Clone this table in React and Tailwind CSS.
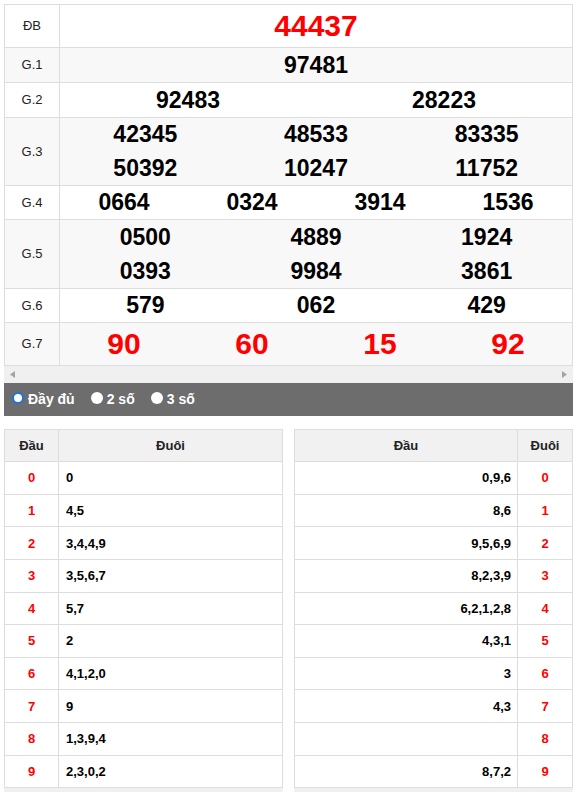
import React from "react";

const topRows = [
  { label: "ĐB", h: "h-[43px]", bg: "bg-white", cols: "grid-cols-1", big: true, lines: [["44437"]] },
  { label: "G.1", h: "h-[35px]", bg: "bg-[#f8f8f8]", cols: "grid-cols-1", lines: [["97481"]] },
  { label: "G.2", h: "h-[35px]", bg: "bg-white", cols: "grid-cols-2", lines: [["92483", "28223"]] },
  { label: "G.3", h: "h-[68px]", bg: "bg-[#f8f8f8]", cols: "grid-cols-3", lines: [["42345", "48533", "83335"], ["50392", "10247", "11752"]] },
  { label: "G.4", h: "h-[34px]", bg: "bg-white", cols: "grid-cols-4", lines: [["0664", "0324", "3914", "1536"]] },
  { label: "G.5", h: "h-[69px]", bg: "bg-[#f8f8f8]", cols: "grid-cols-3", lines: [["0500", "4889", "1924"], ["0393", "9984", "3861"]] },
  { label: "G.6", h: "h-[34px]", bg: "bg-white", cols: "grid-cols-3", lines: [["579", "062", "429"]] },
  { label: "G.7", h: "h-[43px]", bg: "bg-[#f8f8f8]", cols: "grid-cols-4", big: true, lines: [["90", "60", "15", "92"]] },
];

const leftData = ["0", "4,5", "3,4,4,9", "3,5,6,7", "5,7", "2", "4,1,2,0", "9", "1,3,9,4", "2,3,0,2"];
const rightData = ["0,9,6", "8,6", "9,5,6,9", "8,2,3,9", "6,2,1,2,8", "4,3,1", "3", "4,3", "", "8,7,2"];

function TopTable() {
  return (
    <div className="w-[569px] border-t border-l border-r border-[#ddd]">
      {topRows.map((r) => (
        <div key={r.label} className={`flex border-b border-[#ddd] ${r.h} ${r.bg}`}>
          <div className="w-[55px] shrink-0 border-r border-[#ddd] flex items-center justify-center text-[13px] text-[#222]">
            {r.label}
          </div>
          <div className="flex-1 flex flex-col">
            {r.lines.map((line, i) => (
              <div key={i} className={`grid ${r.cols} flex-1 items-center text-center`}>
                {line.map((n, j) => (
                  <span
                    key={j}
                    className={
                      r.big
                        ? "font-bold text-[30px] leading-none text-[#ff0000]"
                        : "font-bold text-[23px] leading-none text-black"
                    }
                  >
                    {n}
                  </span>
                ))}
              </div>
            ))}
          </div>
        </div>
      ))}
    </div>
  );
}

function ScrollStrip() {
  return (
    <div className="w-[569px] h-[17px] bg-[#f0f0f0] flex items-center justify-between px-[6px]">
      <svg width="5" height="7" viewBox="0 0 5 7"><polygon points="5,0 5,7 0,3.5" fill="#a3a3a3" /></svg>
      <svg width="5" height="7" viewBox="0 0 5 7"><polygon points="0,0 0,7 5,3.5" fill="#a3a3a3" /></svg>
    </div>
  );
}

function Radio({ checked, label }) {
  return (
    <div className="flex items-center gap-[4px] h-[20px]">
      {checked ? (
        <span className="w-[12px] h-[12px] mb-[3px] rounded-full border-2 border-[#1a73e8] bg-white box-border" />
      ) : (
        <span className="w-[12px] h-[12px] mb-[3px] rounded-full bg-white" />
      )}
      <span className="text-[14px] font-bold text-white leading-[20px]">{label}</span>
    </div>
  );
}

function LotoTable({ side, data }) {
  const left = side === "left";
  return (
    <div className="w-[279px]">
      <div className="border-t border-l border-r border-[#ddd]">
        <div className="flex h-[32.3px] border-b border-[#ddd] bg-[#f1f1f1] text-[13px] font-bold text-[#222]">
          {left ? (
            <>
              <div className="w-[54px] shrink-0 border-r border-[#ddd] flex items-center justify-center">Đầu</div>
              <div className="flex-1 flex items-center justify-center">Đuôi</div>
            </>
          ) : (
            <>
              <div className="flex-1 border-r border-[#ddd] flex items-center justify-center">Đầu</div>
              <div className="w-[54px] shrink-0 flex items-center justify-center">Đuôi</div>
            </>
          )}
        </div>
        {data.map((v, i) => (
          <div key={i} className="flex h-[32.6px] border-b border-[#ddd] bg-white text-[13px] font-bold">
            {left ? (
              <>
                <div className="w-[54px] shrink-0 border-r border-[#ddd] flex items-center justify-center text-[#ff0000]">{i}</div>
                <div className="flex-1 flex items-center pl-[7px] text-black">{v}</div>
              </>
            ) : (
              <>
                <div className="flex-1 border-r border-[#ddd] flex items-center justify-end pr-[6px] text-black">{v}</div>
                <div className="w-[54px] shrink-0 flex items-center justify-center text-[#ff0000]">{i}</div>
              </>
            )}
          </div>
        ))}
      </div>
      <div className="h-[17px] bg-[#f0f0f0]" />
    </div>
  );
}

export default function App() {
  return (
    <div className="w-[577px] h-[792px] overflow-hidden bg-white pl-[4px] pt-[4px] font-['Liberation_Sans',Arial,sans-serif]">
      <TopTable />
      <ScrollStrip />
      <div className="w-[569px] h-[33px] bg-[#6d6d6d] flex items-start pl-[8px] pt-[6px] gap-[16px]">
        <Radio checked label="Đầy đủ" />
        <Radio label="2 số" />
        <Radio label="3 số" />
      </div>
      <div className="mt-[13px] flex gap-[11px] w-[569px]">
        <LotoTable side="left" data={leftData} />
        <LotoTable side="right" data={rightData} />
      </div>
    </div>
  );
}
